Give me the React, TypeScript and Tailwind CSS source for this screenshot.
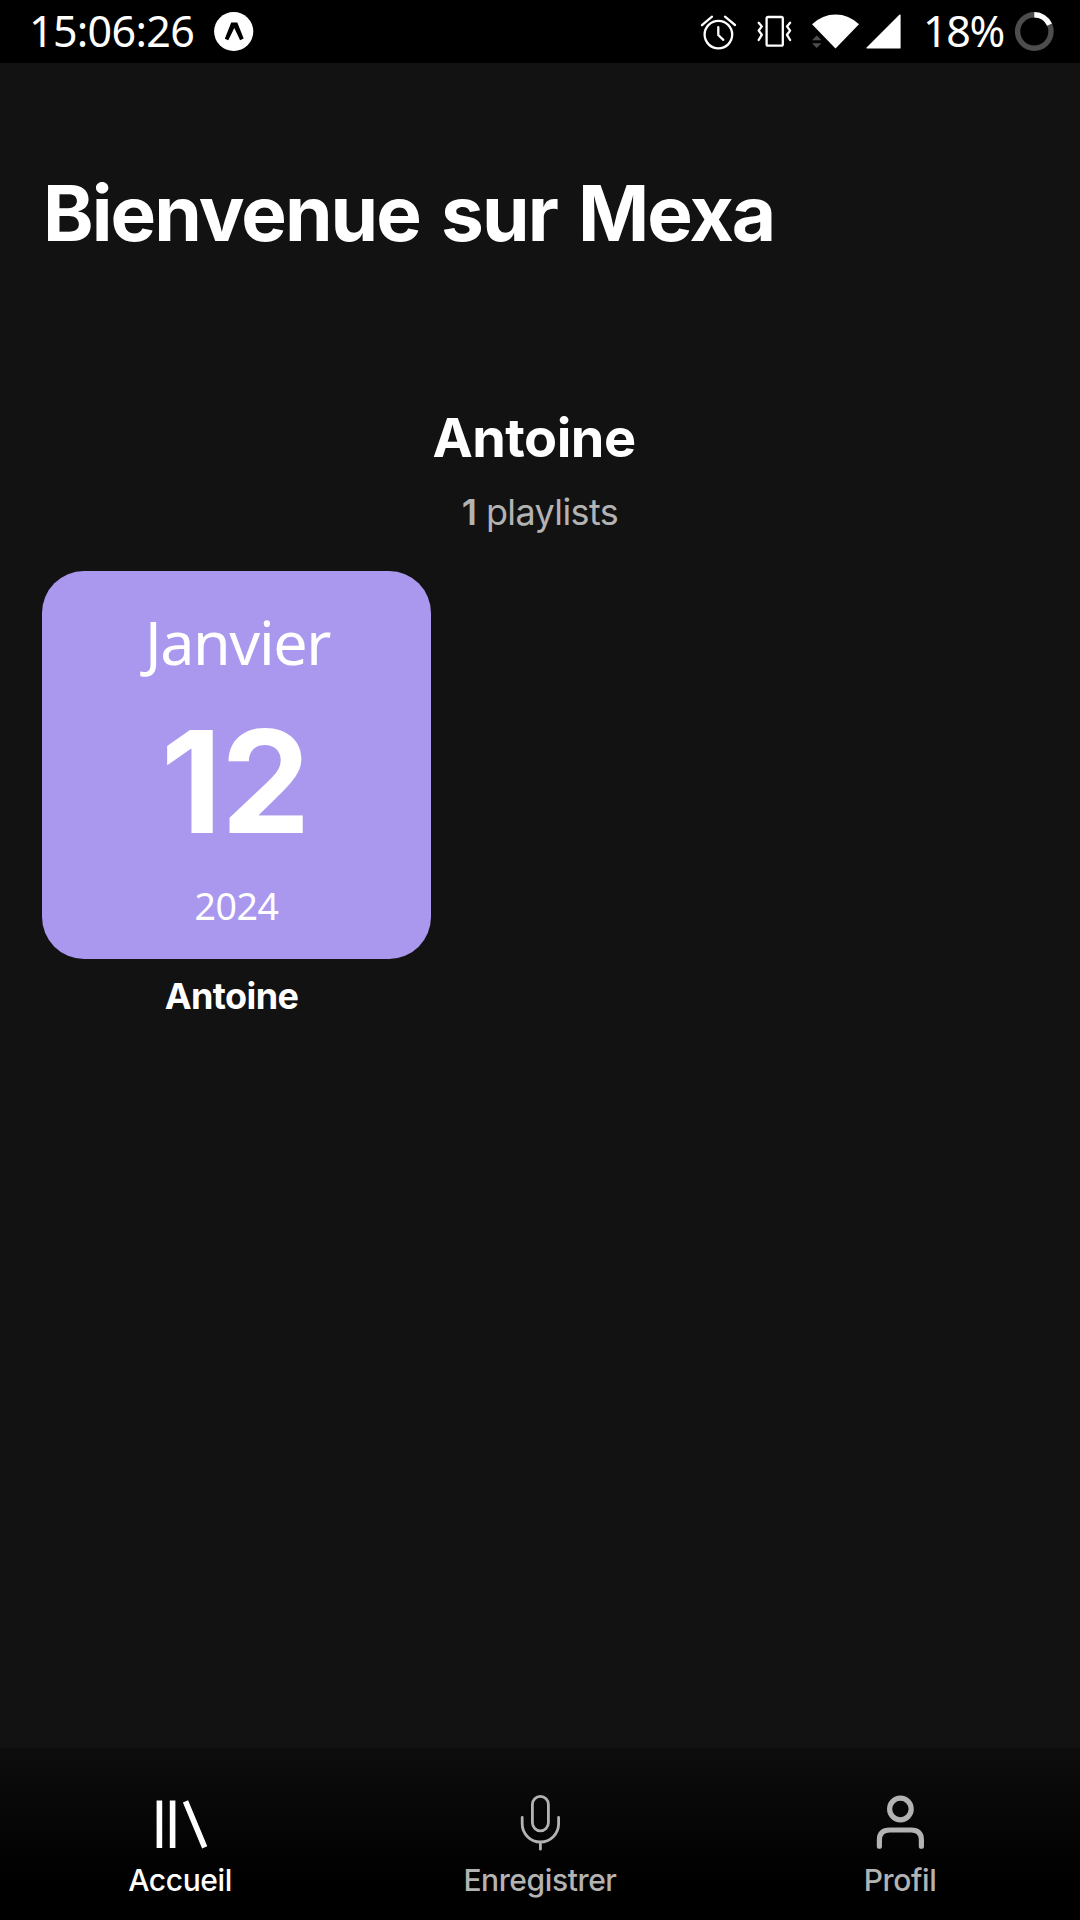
import type { ReactNode } from "react";

function StatusBar() {
  return (
    <header className="flex h-[63px] items-center bg-black pl-[29px] pr-[26px] font-['Noto_Sans',sans-serif] text-[43px] leading-[60px] text-white">
      <span className="-mt-[2px] w-[185px] tracking-[-0.7px]">15:06:26</span>
      <svg className="h-[63px] w-10" viewBox="214 0 40 63">
        <circle cx="233.7" cy="31.5" r="19.6" fill="#fff" />
        <path d="M224.8 38.8 231.2 22.5h6.1l6.4 16-3.6 1.7L234.3 28l-6 12.3z" fill="#000" />
      </svg>
      <div className="ml-auto flex h-[63px] items-center">
        <svg className="mr-[18px] h-[63px] w-[38px]" viewBox="700 0 38 63" fill="none" stroke="#fff" strokeWidth="2.3">
          <circle cx="718.4" cy="34.6" r="13.8" />
          <path d="M702 25.2 712 16.7M725 16.7l10 8.3" strokeLinecap="round" />
          <path d="M718.3 27.2V35l5 4.8" strokeLinecap="round" />
        </svg>
        <svg className="mr-[17px] h-[63px] w-[38px]" viewBox="756 0 38 63" fill="none" stroke="#fff" strokeWidth="2.3">
          <rect x="766.6" y="17" width="16.2" height="28.7" rx="1.5" />
          <path d="m758.7 22.8 3.1 3.6-3.1 4.2 3.1 4.2-3.1 5.2M790.1 22.8l-3.1 3.6 3.1 4.2-3.1 4.2 3.1 5.2" strokeLinecap="round" strokeLinejoin="round" />
        </svg>
        <svg className="mr-1 h-[63px] w-[50px]" viewBox="811 0 50 63">
          <path d="m812 40.2 4.7-4.7 4.7 4.7zM812 43.2h9.4l-4.7 4.8z" fill="#4d4d4d" />
          <path d="M812 24.3q10.5-9.8 23.6-9.8T859 24.3L835.5 48.6z" fill="#fff" />
        </svg>
        <svg className="mr-[21px] h-[63px] w-[37px]" viewBox="865 0 37 63">
          <path d="M867 48h33V15z" fill="#fff" stroke="#fff" strokeWidth="1.2" strokeLinejoin="round" />
        </svg>
        <span className="-mt-[2px] w-[91px] tracking-[-1.4px]">18%</span>
        <svg className="h-[63px] w-10" viewBox="1014 0 40 63" fill="none" strokeWidth="5.4">
          <circle cx="1034.3" cy="31.5" r="16.7" stroke="#4d4d4d" />
          <path d="M1034.3 14.8a16.7 16.7 0 0 1 15.2 9.8" stroke="#fff" />
        </svg>
      </div>
    </header>
  );
}

function PlaylistCard() {
  return (
    <article className="mt-[35px] w-[389px] text-center">
      <div className="flex h-[388px] flex-col rounded-[42px] bg-[#a998ee] pt-[31px] font-['Noto_Sans',sans-serif]">
        <div className="pl-[2px] text-[61px] leading-[80px] tracking-[-1.4px]">Janvier</div>
        <div className="mt-[29px] pr-[3px] font-[Inter,sans-serif] text-[142px] leading-[140px] font-bold tracking-[-1px]">12</div>
        <div className="mt-[30px] text-[37.5px] leading-[50px] tracking-[-0.4px]">2024</div>
      </div>
      <div className="mt-[17px] pr-[10px] text-[36px] leading-[41px] font-bold tracking-[-0.6px]">Antoine</div>
    </article>
  );
}

function Tab({ label, active, children }: { label: string; active?: boolean; children: ReactNode }) {
  return (
    <div className={`flex flex-1 flex-col items-center pt-10 ${active ? "text-white" : "text-[#b3b3b3]"}`}>
      <svg className="size-[72px]" viewBox="0 0 72 72" fill="none" stroke="currentColor">
        {children}
      </svg>
      <span className="text-[30px] leading-[41px] font-[450] tracking-[-0.4px]">{label}</span>
    </div>
  );
}

export default function App() {
  return (
    <div className="flex h-[1920px] w-[1080px] flex-col bg-[#121212] font-[Inter,sans-serif] text-white">
      <StatusBar />
      <main className="flex flex-1 flex-col px-[42px]">
        <h1 className="mt-[100px] pl-px text-[76.5px] leading-[101px] font-bold tracking-[-1.9px] whitespace-nowrap [word-spacing:4.8px]">
          Bienvenue sur Mexa
        </h1>
        <h2 className="mt-[139px] pr-3 text-center text-[54px] leading-[70px] font-bold tracking-[-0.5px]">Antoine</h2>
        <p className="mt-[15px] text-center text-[36px] leading-[48px] tracking-[-0.6px] text-[#b3b3b3]">
          <span className="font-semibold">1</span> playlists
        </p>
        <PlaylistCard />
      </main>
      <nav className="flex h-[172px] bg-linear-to-b/srgb from-[#0d0d0d] to-black to-80%">
        <Tab label="Accueil" active>
          <path d="M15.4 12.5V60M28.6 12.5V60M41.5 13.4l19.2 45.9" strokeWidth="5.6" />
        </Tab>
        <Tab label="Enregistrer">
          <g strokeWidth="2.8" strokeLinecap="round">
            <rect x="28.4" y="8.4" width="16" height="34.4" rx="8" />
            <path d="M18.2 29.5v6.3a18.2 18.2 0 0 0 36.4 0v-6.3M36.4 54v7.2" />
          </g>
        </Tab>
        <Tab label="Profil">
          <g strokeWidth="5.2" strokeLinecap="round">
            <circle cx="36.4" cy="21" r="10.8" />
            <path d="M15.4 58.2V52q0-10 10.4-10H47q10.4 0 10.4 10v6.2" />
          </g>
        </Tab>
      </nav>
    </div>
  );
}
